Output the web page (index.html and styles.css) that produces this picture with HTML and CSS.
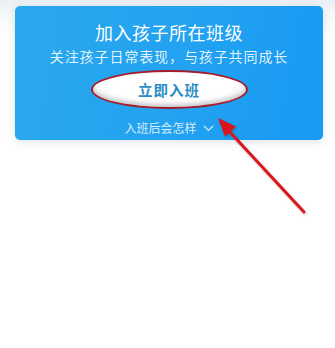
FILE: index.html
```html
<!DOCTYPE html>
<html lang="zh-CN">
<head>
<meta charset="utf-8">
<link rel="stylesheet" href="styles.css">
</head>
<body>
<div class="page">
  <div class="card">
    <div class="title">加入孩子所在班级</div>
    <div class="subtitle">关注孩子日常表现，与孩子共同成长</div>
    <div class="btn">立即入班</div>
    <div class="more">入班后会怎样
      <svg class="chev" width="11" height="7" viewBox="0 0 11 7"><polyline points="1,1 5.5,5.5 10,1" fill="none" stroke="rgba(255,255,255,0.8)" stroke-width="1.2"/></svg>
    </div>
  </div>
  <svg class="arrow" width="335" height="348" viewBox="0 0 335 348">
    <g filter="url(#sh)">
      <line x1="304" y1="212" x2="228" y2="130" stroke="#d8191c" stroke-width="3" stroke-linecap="round"/>
      <polygon points="218,118 236,126.5 225,136.5" fill="#d8191c"/>
    </g>
    <defs>
      <filter id="sh" x="-20%" y="-20%" width="140%" height="140%">
        <feDropShadow dx="1" dy="1.5" stdDeviation="1" flood-color="#000" flood-opacity="0.25"/>
      </filter>
    </defs>
  </svg>
</div>
</body>
</html>
```
FILE: styles.css
```css
html, body {
  margin: 0;
  padding: 0;
  background: #fff;
}
.page {
  position: relative;
  width: 335px;
  height: 348px;
  padding: 6px 12px 0 15px;
  box-sizing: border-box;
  background: linear-gradient(180deg, #eaeff4 0px, #f7f9fb 16px, #fff 34px);
  font-family: "Noto Sans CJK SC", "Noto Sans", sans-serif;
}
.card {
  width: 308px;
  height: 134px;
  box-sizing: border-box;
  border-radius: 5px;
  background: linear-gradient(100deg, #2aa8ee 0%, #22a2f0 55%, #1899f4 100%);
  box-shadow: 0 2px 8px rgba(120, 150, 180, 0.25);
  display: flex;
  flex-direction: column;
  align-items: center;
  padding-top: 14px;
}
.title {
  color: #fff;
  font-size: 18px;
  line-height: 24px;
  letter-spacing: 0.5px;
}
.subtitle {
  margin-top: 2px;
  color: rgba(255, 255, 255, 0.88);
  font-size: 14px;
  line-height: 20px;
  letter-spacing: 0.9px;
}
.btn {
  margin-top: 4px;
  width: 157px;
  height: 39px;
  box-sizing: border-box;
  border: 2px solid #a51d2a;
  border-radius: 50%;
  background: radial-gradient(ellipse at 50% 40%, #ffffff 55%, #f1f3f5 80%, #d9dde2 100%);
  box-shadow: inset 0 -3px 4px rgba(120, 120, 130, 0.35);
  display: flex;
  align-items: center;
  justify-content: center;
  color: #2a8cc4;
  font-weight: 700;
  font-size: 14.5px;
  letter-spacing: 1px;
}
.more {
  margin-top: 11px;
  color: rgba(255, 255, 255, 0.82);
  font-size: 12px;
  line-height: 16px;
  display: flex;
  align-items: center;
  gap: 6px;
}
.chev {
  display: block;
}
.arrow {
  position: absolute;
  left: 0;
  top: 0;
  pointer-events: none;
}
```
